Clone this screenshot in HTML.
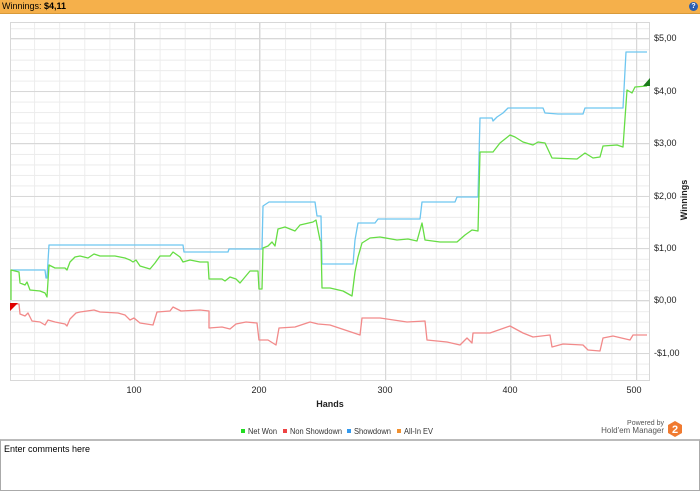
<!DOCTYPE html>
<html><head><meta charset="utf-8"><style>
body{margin:0;width:700px;height:492px;background:#fff;font-family:"Liberation Sans",sans-serif;overflow:hidden;position:relative}
.hdr{position:absolute;left:0;top:0;width:700px;height:13px;background:#f5b04b;border-bottom:1px solid #d89a3a;font-size:9px;line-height:13px}
.hdr span{margin-left:2px}
.help{position:absolute;right:2px;top:2px;width:9px;height:9px;border-radius:50%;background:#2a5fb0;color:#fff;font-size:7px;line-height:9px;text-align:center;font-weight:bold}
.box{position:absolute;left:0;top:439px;border:1px solid #aaa;border-top:2px solid #bbb;font-size:9px;padding:3px 3px;box-sizing:border-box;width:700px;height:52px}
</style></head><body>
<div class="hdr"><span>Winnings: <b>$4,11</b></span><div class="help">?</div></div>
<svg width="700" height="492" style="position:absolute;left:0;top:0" xmlns="http://www.w3.org/2000/svg">
<defs>
<pattern id="hp" patternUnits="userSpaceOnUse" x="0" y="300.7" width="700" height="10.48"><line x1="0" y1="0.5" x2="700" y2="0.5" stroke="#ececec" stroke-width="1"/></pattern>
<pattern id="vp" patternUnits="userSpaceOnUse" x="9" y="0" width="25.1" height="500"><line x1="0.5" y1="0" x2="0.5" y2="500" stroke="#ececec" stroke-width="1"/></pattern>
</defs>
<rect x="10" y="22" width="640" height="359" fill="url(#hp)"/>
<rect x="10" y="22" width="640" height="359" fill="url(#vp)"/>
<g stroke="#d8d8d8" stroke-width="1">
<line x1="10" y1="38.5" x2="650" y2="38.5"/><line x1="10" y1="91.5" x2="650" y2="91.5"/><line x1="10" y1="143.5" x2="650" y2="143.5"/><line x1="10" y1="196.5" x2="650" y2="196.5"/><line x1="10" y1="248.5" x2="650" y2="248.5"/><line x1="10" y1="300.5" x2="650" y2="300.5"/><line x1="10" y1="353.5" x2="650" y2="353.5"/>
<line x1="134.5" y1="22" x2="134.5" y2="381"/><line x1="259.5" y1="22" x2="259.5" y2="381"/><line x1="385.5" y1="22" x2="385.5" y2="381"/><line x1="510.5" y1="22" x2="510.5" y2="381"/><line x1="636.5" y1="22" x2="636.5" y2="381"/>
</g>
<rect x="10.5" y="22.5" width="639" height="358" fill="none" stroke="#d8d8d8"/>
<g fill="none" stroke-width="1.3" stroke-linejoin="round">
<polyline stroke="#f28a8a" points="11,304 19,304 20,314 25,316 28,313 32,321 40,322 45,325 48,320 55,322 65,324 67,326 70,319 76,313 80,312 94,310 100,312 118,313 125,315 130,320 134,318 140,323 153,325 157,312 170,311 173,307 181,311 200,310 209,311 209,328 222,327 230,329 236,324 246,322 257,323 259,340 268,340 276,345 279,328 295,327 310,322 318,324 330,325 360,335 362,318 380,318 407,322 425,321 427,340 447,342 460,345 467,338 472,343 473,333 490,333 510,326 523,333 533,337 550,335 552,347 563,344 583,345 588,350 600,351 603,338 613,336 630,340 633,335 647,335"/>
<polyline stroke="#6ec6f0" points="11,270 45,270 46,278 47,278 49,245 183,245 184,252 228,252 229,249 262,249 263,206 269,202 315,202 317,216 321,216 322,264 353,264 355,240 358,223 375,223 378,219 420,219 422,202 455,202 457,197 478,197 480,118 492,118 493,121 497,117 503,113 508,108 543,108 545,113 558,114 583,114 585,108 623,108 626,52 647,52"/>
<polyline stroke="#66dd44" points="11,300 11,270 19,272 20,283 25,285 27,282 30,290 40,291 45,293 47,297 49,265 55,268 65,268 67,270 70,262 75,257 80,256 88,258 94,254 100,256 115,256 125,258 130,260 133,262 136,260 140,266 150,269 155,263 160,256 170,256 173,252 180,257 183,262 190,260 200,262 208,262 209,279 222,279 225,281 230,277 236,279 240,283 245,277 250,271 258,271 259,289 262,289 263,248 268,246 272,242 275,246 278,229 285,227 295,231 300,225 313,222 316,220 320,240 321,241 322,288 330,288 343,291 352,296 355,272 358,257 362,243 370,238 380,237 397,240 408,239 417,241 422,223 425,240 440,242 457,242 465,235 472,230 478,231 480,152 493,152 500,143 510,135 515,137 523,142 533,145 538,142 545,143 552,158 577,159 585,153 593,158 600,157 603,146 617,145 623,147 627,90 632,93 635,87 647,86"/>
</g>
<polygon points="10,303 18,303 10,311" fill="#e00000"/>
<polygon points="643,86 650,78 650,86" fill="#1a7a1a"/>
<g font-size="9" fill="#222">
<text x="654" y="41">$5,00</text><text x="654" y="94">$4,00</text><text x="654" y="146">$3,00</text><text x="654" y="199">$2,00</text><text x="654" y="251">$1,00</text><text x="654" y="303">$0,00</text><text x="654" y="356">-$1,00</text>
<text x="134" y="393" text-anchor="middle">100</text><text x="259" y="393" text-anchor="middle">200</text><text x="385" y="393" text-anchor="middle">300</text><text x="510" y="393" text-anchor="middle">400</text><text x="634" y="393" text-anchor="middle">500</text>
<text x="330" y="407" text-anchor="middle" font-weight="bold">Hands</text>
<text transform="translate(687,200) rotate(-90)" text-anchor="middle" font-weight="bold">Winnings</text>
</g>
<g font-size="8" fill="#333">
<rect x="241" y="429" width="4" height="4" fill="#22dd22"/><text x="248" y="434" textLength="29" lengthAdjust="spacingAndGlyphs">Net Won</text>
<rect x="283" y="429" width="4" height="4" fill="#ee4444"/><text x="290" y="434" textLength="52" lengthAdjust="spacingAndGlyphs">Non Showdown</text>
<rect x="347" y="429" width="4" height="4" fill="#3399ee"/><text x="354" y="434" textLength="37" lengthAdjust="spacingAndGlyphs">Showdown</text>
<rect x="397" y="429" width="4" height="4" fill="#f09030"/><text x="404" y="434" textLength="29" lengthAdjust="spacingAndGlyphs">All-In EV</text>
<text x="664" y="425" text-anchor="end" font-size="7" fill="#555">Powered by</text>
<text x="664" y="433" text-anchor="end" fill="#555">Hold'em Manager</text>
</g>
<polygon points="675,421 682,425 682,433 675,437 668,433 668,425" fill="#f07a30"/>
<text x="675" y="433" text-anchor="middle" font-size="11" font-weight="bold" fill="#fff">2</text>
</svg>
<div class="box">Enter comments here</div>
</body></html>
